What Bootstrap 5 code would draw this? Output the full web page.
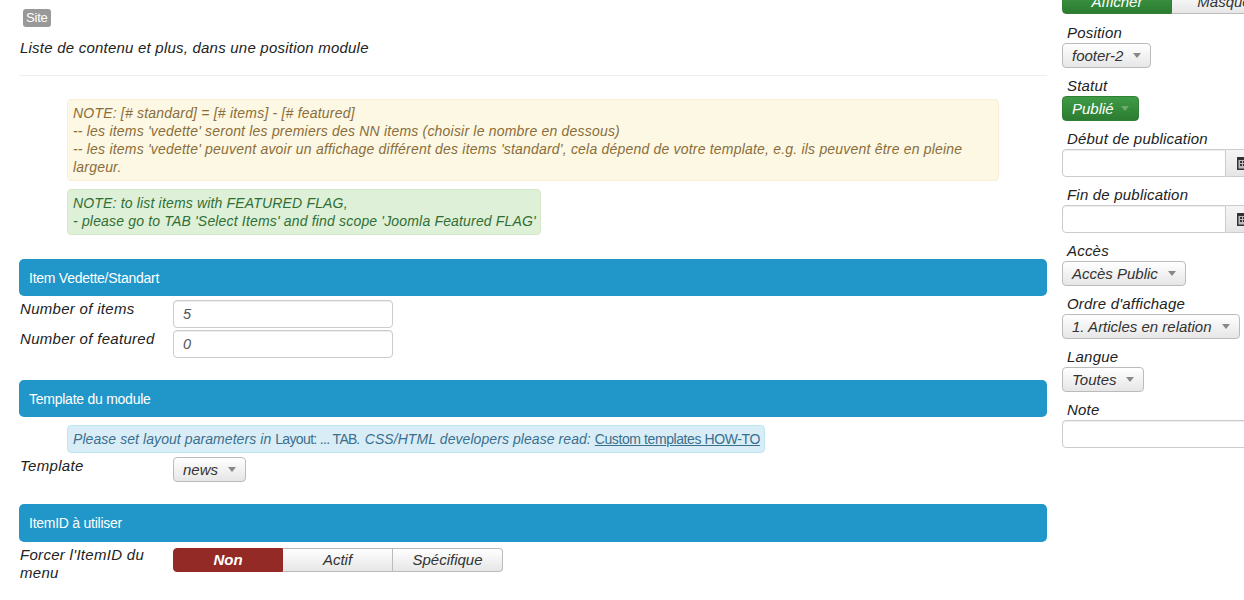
<!DOCTYPE html>
<html lang="fr">
<head>
<meta charset="utf-8">
<title>Module</title>
<link rel="stylesheet" href="https://cdn.jsdelivr.net/npm/bootstrap@5.3.0/dist/css/bootstrap.min.css">
<style>
html,body{height:600px;overflow:hidden;background:#fff}
body{font-family:"Liberation Sans",Arial,sans-serif;font-size:15px;line-height:18px;font-style:italic;color:#333}
.page-wrap{width:1244px;height:600px;overflow:hidden;padding-left:19px;gap:15px}
.main-col{width:1028px;flex:none}
.side-col{width:300px;flex:none;margin-top:-10px}
.site-tag{margin:9px 0 0 4px;background:#999;color:#fff;font:normal 400 13px/18px "Liberation Sans",sans-serif;letter-spacing:-.2px;padding:0 3px;border-radius:3px;height:18px;display:inline-block;vertical-align:top}
.intro{margin:12px 0 0 1px;color:#222;height:18px;letter-spacing:.22px}
.rule{margin:18px 0 23px;border:0;border-top:1px solid #eee;opacity:1}
.note{margin:0 48px 8px;padding:4px 5px;border-radius:4px;border:1px solid;font-size:14px;letter-spacing:.2px;line-height:18px}
.note-warn{background:#fcf8e3;border-color:#fbeed5;color:#8a6d3b;width:932px}
.note-ok{background:#dff0d8;border-color:#d6e9c6;color:#2f6f36;width:474px;white-space:nowrap;letter-spacing:.17px}
.note-info{background:#d9edf7;border-color:#bce8f1;color:#3a6f8e;width:698px;margin-bottom:4px;white-space:nowrap;letter-spacing:.07px}
.note-info .plain{font-style:normal;letter-spacing:-.65px}
.note-info a{color:#3a6f8e;font-style:normal;letter-spacing:-.41px}
.band{background:#2196c9;color:#fff;font:normal 400 14px/18px "Liberation Sans",sans-serif;letter-spacing:-.25px;padding:10px 10px 9px;border-radius:5px;height:37px}
.band-first{margin-top:24px}
.band-next{margin-top:22px}
.band-tall{height:38px}
.field{display:flex;margin-top:4px}
.field + .field{margin-top:2px}
.field-label{width:154px;flex:none;padding-left:1px;color:#222;letter-spacing:.3px}
.field-label-up{margin-top:-2px}
.field-seg{margin-top:6px}
.txt{width:220px;height:28px;border:1px solid #ccc;border-radius:4px;background:#fff;font-style:italic;font-size:14.5px;color:#555;padding:3px 9px;box-shadow:inset 0 1px 1px rgba(0,0,0,.075);line-height:20px}
.pick{height:25px;padding:0 9px;display:inline-flex;align-items:center;gap:10px;border:1px solid #bbb;border-radius:4px;background:linear-gradient(#fff,#e6e6e6);font-size:15px;font-style:italic;color:#333;line-height:18px}
.pick::after{content:"";border-left:4px solid transparent;border-right:4px solid transparent;border-top:5px solid #888;margin-top:-1px}
.pick-green{background:linear-gradient(#3f9b45,#2c7c31);border-color:#2f7f35;color:#fff;font-weight:400;gap:7px}
.pick-green::after{border-top-color:#6ea870}
.seg{display:flex}
.seg .seg-btn{width:110px;height:24px;padding:0;font-size:15px;font-style:italic;line-height:22px;border:1px solid #bbb;border-left-width:0;border-radius:0;background:linear-gradient(#fff,#e6e6e6);color:#333}
.seg .seg-btn:first-child{border-left-width:1px;border-radius:4px 0 0 4px}
.seg .seg-btn:last-child{border-radius:0 4px 4px 0}
.seg .seg-red{background:#942a25;border-color:#942a25;color:#fff;font-weight:700}
.seg .seg-green{background:linear-gradient(#3f9b45,#2c7c31);border-color:#2f7f35;color:#fff}
.side-label{margin:0 0 1px 5px;height:18px;color:#222;display:block;letter-spacing:.2px}
.side-item{margin-bottom:9px}
.side-top{margin-bottom:10px}
.date-box{display:flex;width:200px}
.date-box .txt{width:164px;border-radius:4px 0 0 4px}
.date-add{width:36px;height:28px;border:1px solid #ccc;border-left:0;background:linear-gradient(#f5f5f5,#e6e6e6);display:flex;align-items:center;padding-left:11px}
.note-input{width:200px;display:block}
</style>
</head>
<body>
<div class="page-wrap d-flex">
  <div class="main-col">
    <span class="site-tag">Site</span>
    <p class="intro">Liste de contenu et plus, dans une position module</p>
    <hr class="rule">
    <div class="note note-warn">NOTE: [# standard] = [# items] - [# featured]<br>-- les items 'vedette' seront les premiers des NN items (choisir le nombre en dessous)<br>-- les items 'vedette' peuvent avoir un affichage différent des items 'standard', cela dépend de votre template, e.g. ils peuvent être en pleine largeur.</div>
    <div class="note note-ok">NOTE: to list items with FEATURED FLAG,<br>- please go to TAB 'Select Items' and find scope 'Joomla Featured FLAG'</div>
    <div class="band band-first">Item Vedette/Standart</div>
    <div class="field"><label class="field-label">Number of items</label><input class="txt" value="5"></div>
    <div class="field"><label class="field-label">Number of featured</label><input class="txt" value="0"></div>
    <div class="band band-next">Template du module</div>
    <div class="note note-info mt-2">Please set layout parameters in <span class="plain">Layout: ... TAB</span>. CSS/HTML developers please read: <a href="#">Custom templates HOW-TO</a></div>
    <div class="field"><label class="field-label">Template</label><button class="btn pick">news</button></div>
    <div class="band band-tall band-next">ItemID à utiliser</div>
    <div class="field field-seg"><label class="field-label field-label-up">Forcer l'ItemID du menu</label>
      <div class="seg"><button class="btn seg-btn seg-red">Non</button><button class="btn seg-btn">Actif</button><button class="btn seg-btn">Spécifique</button></div>
    </div>
  </div>
  <div class="side-col">
    <div class="seg side-top"><button class="btn seg-btn seg-green">Afficher</button><button class="btn seg-btn">Masquer</button></div>
    <label class="side-label">Position</label>
    <div class="side-item"><button class="btn pick">footer-2</button></div>
    <label class="side-label">Statut</label>
    <div class="side-item"><button class="btn pick pick-green">Publié</button></div>
    <label class="side-label">Début de publication</label>
    <div class="side-item date-box"><input class="txt"><span class="date-add"><svg width="12" height="13" viewBox="0 0 12 13"><rect width="12" height="13" fill="#333"/><rect x="1.5" y="3" width="9" height="8.5" fill="#bbb"/><path d="M3 4h2v2H3zM6 4h2v2H6zM3 7h2v2H3zM6 7h2v2H6z" fill="#333"/></svg></span></div>
    <label class="side-label">Fin de publication</label>
    <div class="side-item date-box"><input class="txt"><span class="date-add"><svg width="12" height="13" viewBox="0 0 12 13"><rect width="12" height="13" fill="#333"/><rect x="1.5" y="3" width="9" height="8.5" fill="#bbb"/><path d="M3 4h2v2H3zM6 4h2v2H6zM3 7h2v2H3zM6 7h2v2H6z" fill="#333"/></svg></span></div>
    <label class="side-label">Accès</label>
    <div class="side-item"><button class="btn pick">Accès Public</button></div>
    <label class="side-label">Ordre d'affichage</label>
    <div class="side-item"><button class="btn pick">1. Articles en relation</button></div>
    <label class="side-label">Langue</label>
    <div class="side-item"><button class="btn pick">Toutes</button></div>
    <label class="side-label">Note</label>
    <input class="txt note-input">
  </div>
</div>
<script src="https://cdn.jsdelivr.net/npm/bootstrap@5.3.0/dist/js/bootstrap.bundle.min.js"></script>
</body>
</html>
